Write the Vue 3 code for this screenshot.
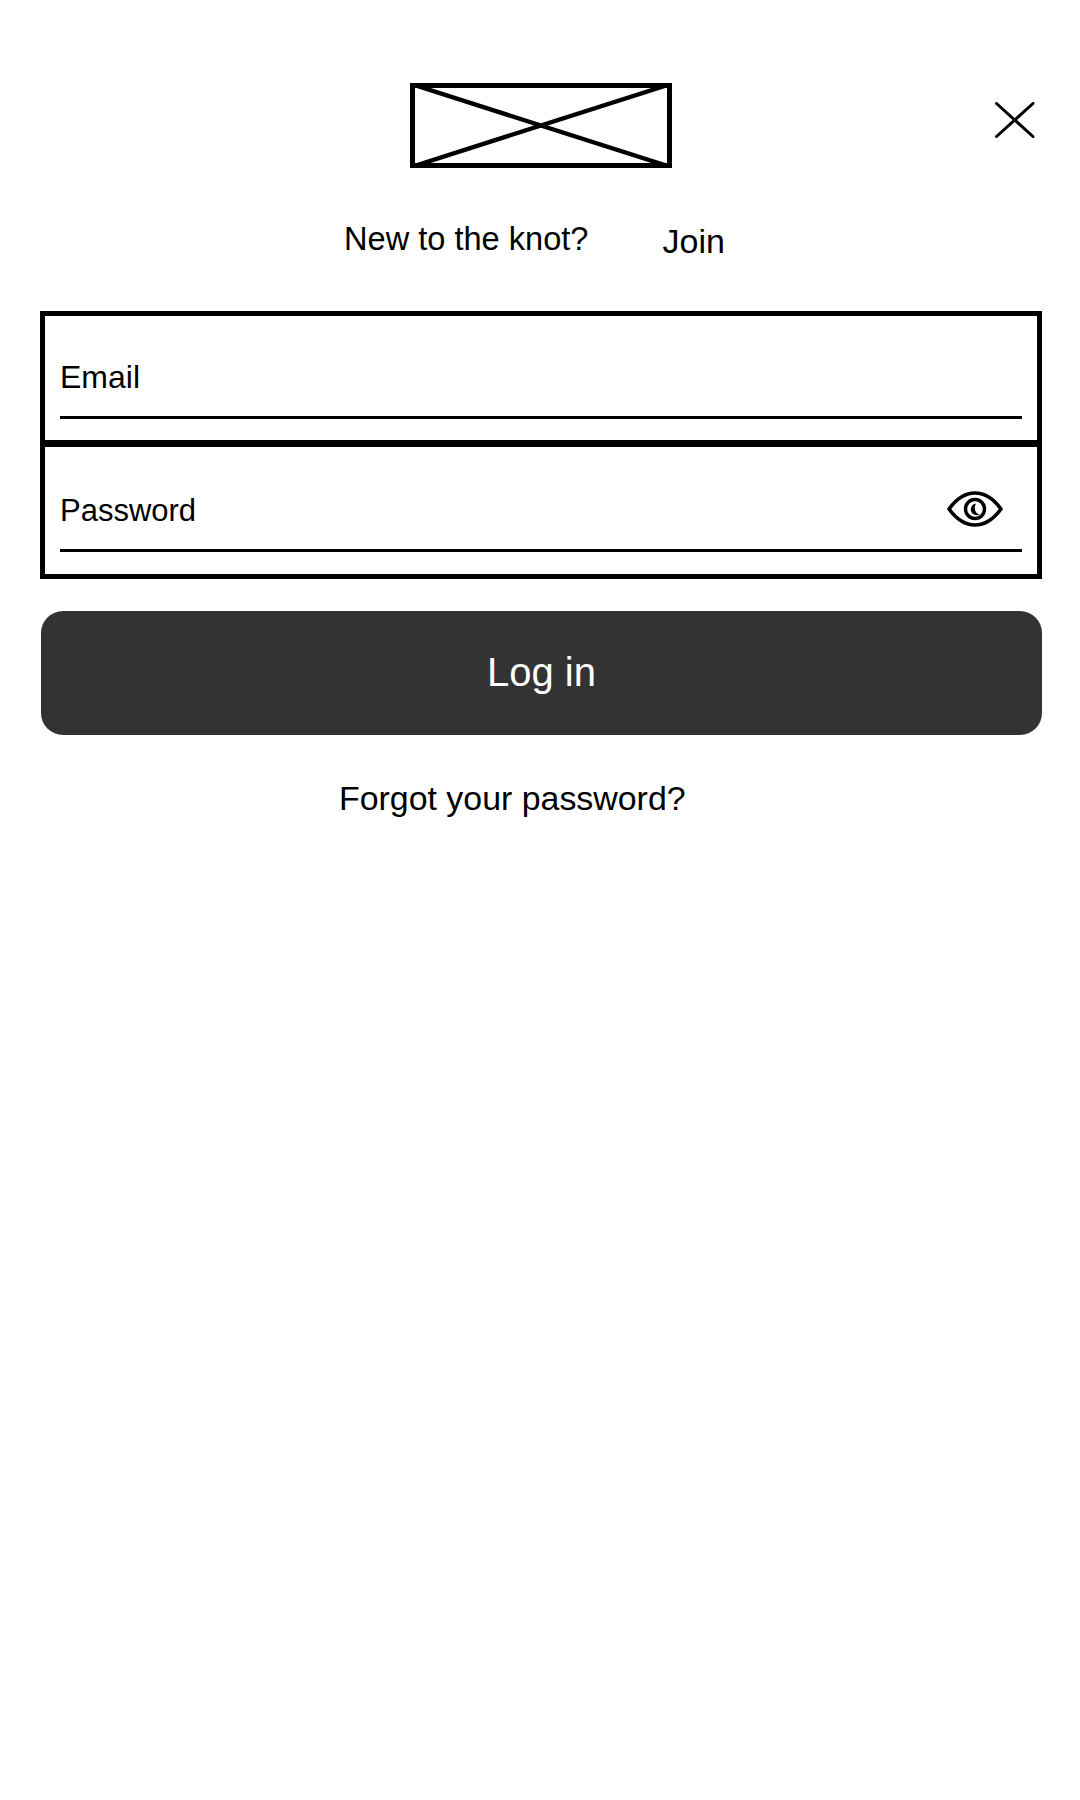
<script setup>
const fields = [
  { label: 'Email', cls: 'email', eye: false },
  { label: 'Password', cls: 'password', eye: true },
]
</script>

<template>
  <main class="page">
    <header class="header">
      <span></span>
      <svg class="logo" width="262" height="85" viewBox="0 0 262 85" aria-label="logo">
        <rect x="2.5" y="2.5" width="257" height="80" fill="none" stroke="#000" stroke-width="5" />
        <path d="M1 1 261 84M261 1 1 84" fill="none" stroke="#000" stroke-width="4.4" />
      </svg>
      <button class="close" aria-label="Close">
        <svg width="40" height="36" viewBox="0 0 40 36">
          <path d="M1.5 1.5 38 34.5M38 1.5 1.5 34.5" fill="none" stroke="#000" stroke-width="3" stroke-linecap="round" />
        </svg>
      </button>
    </header>

    <p class="join-row">
      <span class="new">New to the knot?</span>
      <a class="join">Join</a>
    </p>

    <form class="fields">
      <div v-for="f in fields" :key="f.label" class="field">
        <div class="line" :class="f.cls">
          <span>{{ f.label }}</span>
          <svg v-if="f.eye" class="eye" width="56" height="36" viewBox="0 0 56 36">
            <path d="M2 18C10 7 18 2 28 2s18 5 26 16c-8 11-16 16-26 16S10 29 2 18Z" fill="none" stroke="#000" stroke-width="3.6" stroke-linejoin="round" />
            <circle cx="28" cy="18" r="9.5" fill="none" stroke="#000" stroke-width="3.4" />
            <path d="M29 12.5a6 6 0 0 0-3 10.5q3 2 6.5 .5q-4-1-4.500-5q-.5-3.500 1-6Z" fill="#000" />
          </svg>
        </div>
      </div>
    </form>

    <button class="login">Log in</button>

    <p class="forgot">Forgot your password?</p>
  </main>
</template>

<style>
html, body { margin: 0; background: #fff; }
</style>

<style scoped>
.page {
  width: 1080px;
  height: 1800px;
  box-sizing: border-box;
  padding: 83px 38px 0 41px;
  font-family: "Liberation Sans", Arial, sans-serif;
  color: #000;
  background: #fff;
}
.header {
  display: grid;
  grid-template-columns: 1fr auto 1fr;
  align-items: start;
  margin-left: -2px;
}
.logo { display: block; }
.close {
  justify-self: end;
  margin: 19px 7px 0 0;
  padding: 0;
  border: 0;
  background: none;
  line-height: 0;
}
.join-row {
  display: flex;
  align-items: flex-start;
  margin: 52px 0 0;
  padding-left: 303px;
  height: 91px;
}
.new { font-size: 32.6px; line-height: 37px; }
.join { margin: 2px 0 0 74px; font-size: 34px; line-height: 39px; }
.fields {
  margin: 0 0 0 -1px;
  border: 5px solid #000;
  background: #fff;
}
.field { padding: 0 15px; height: 124px; }
.field + .field { border-top: 7px solid #000; height: 127px; }
.line {
  display: flex;
  align-items: center;
  justify-content: space-between;
  box-sizing: border-box;
  border-bottom: 3px solid #000;
  padding-top: 30px;
}
.email { font-size: 32px; height: 103px; padding-bottom: 8px; }
.password { font-size: 31px; height: 105px; padding-top: 31px; padding-bottom: 5px; }
.eye { margin: -5px 19px 0 0; }
.login {
  display: block;
  width: 1001px;
  height: 124px;
  margin: 32px 0 0;
  padding: 0 0 2px;
  border: 0;
  border-radius: 22px;
  background: #333;
  color: #fff;
  font: 40px "Liberation Sans", Arial, sans-serif;
}
.forgot {
  margin: 44px 0 0;
  padding-left: 298px;
  font-size: 33.9px;
  line-height: 39px;
}
</style>
